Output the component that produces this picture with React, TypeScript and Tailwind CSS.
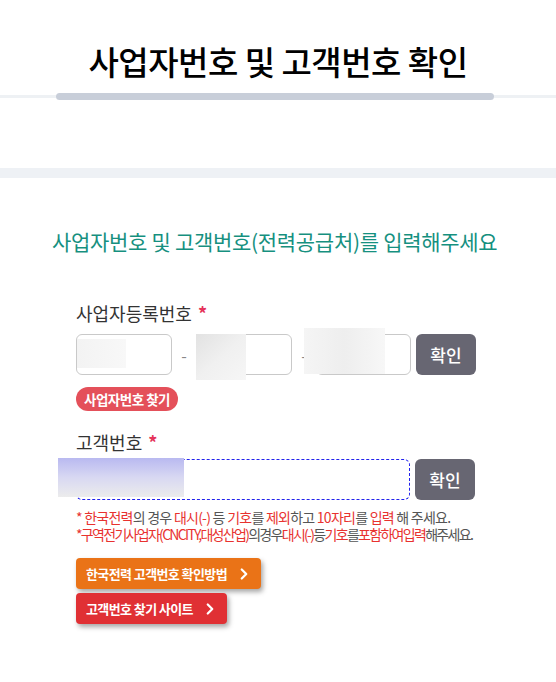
import { ChevronRight } from 'lucide-react';

const FONT = "font-['Noto_Sans_CJK_KR','Noto_Sans',sans-serif]";

function Blur({ className }: { className: string }) {
  // privacy blur patches over the inputs
  return <div className={`absolute pointer-events-none ${className}`} />;
}

export default function App() {
  return (
    <div className={`${FONT} w-[556px] h-[682px] bg-white text-[#222] overflow-hidden`}>
      {/* Title */}
      <div className="pt-[36px] h-[93px] text-center">
        <h1 className="text-[33px] font-medium leading-[50px] tracking-[-0.5px] text-black">
          사업자번호 및 고객번호 확인
        </h1>
      </div>
      <div className="flex items-center h-[7px]">
        <div className="w-[56px] h-[3px] bg-[#eef1f4]" />
        <div className="w-[438px] h-[7px] rounded-full bg-[#c8ced9]" />
        <div className="flex-1 h-[3px] bg-[#eef1f4]" />
      </div>
      <div className="h-[68px]" />
      <div className="h-[10px] bg-[#eef1f5]" />

      {/* Subtitle */}
      <div className="pt-[48px] pl-[52px]">
        <p className="text-[21px] leading-[30px] text-[#16907f] tracking-[-0.3px]">
          사업자번호 및 고객번호(전력공급처)를 입력해주세요
        </p>
      </div>

      <div className="pl-[76px] pt-[44px]">
        {/* 사업자등록번호 */}
        <div className="flex items-center gap-[6px] h-[26px]">
          <span className="text-[18px] text-[#333]">사업자등록번호</span>
          <span className="text-[#e5335a] text-[18px] font-bold leading-none">*</span>
        </div>
        <div className="relative flex items-center mt-[8px] h-[41px]">
          <div className="w-[96px] h-[41px] rounded-[6px] border border-[#c9c9c9]" />
          <span className="w-[24px] text-center text-[#888]">-</span>
          <div className="w-[96px] h-[41px] rounded-[6px] border border-[#c9c9c9]" />
          <span className="w-[24px] text-center text-[#888]">-</span>
          <div className="w-[95px] h-[41px] rounded-[6px] border border-[#c9c9c9]" />
          <button className="ml-[5px] w-[60px] h-[41px] rounded-[6px] bg-[#676672] text-white text-[17px] font-medium">
            확인
          </button>
          <Blur className="left-[1px] top-[5px] w-[49px] h-[29px] bg-gradient-to-r from-[#f3f3f3] to-[#f8f8f8]" />
          <Blur className="left-[120px] top-[0px] w-[50px] h-[46px] bg-gradient-to-br from-[#e2e2e2] via-[#f0f0f0] to-[#f6f6f6]" />
          <Blur className="left-[228px] top-[-6px] w-[81px] h-[46px] bg-gradient-to-r from-[#f5f5f5] via-[#eeeeee] to-[#f7f7f7]" />
        </div>
        <div className="mt-[11px]">
          <span className="inline-flex items-center h-[24px] px-[8px] rounded-full bg-[#e4505a] text-white text-[13.5px] font-bold tracking-[-0.5px]">
            사업자번호 찾기
          </span>
        </div>

        {/* 고객번호 */}
        <div className="flex items-center gap-[6px] h-[26px] mt-[18px]">
          <span className="text-[18px] text-[#333]">고객번호</span>
          <span className="text-[#e5335a] text-[18px] font-bold leading-none">*</span>
        </div>
        <div className="relative flex items-center mt-[4px] h-[41px]">
          <div className="w-[334px] h-[41px] rounded-[6px] border border-dashed border-[#2222ee]" />
          <button className="ml-[5px] w-[60px] h-[41px] rounded-[6px] bg-[#676672] text-white text-[17px] font-medium">
            확인
          </button>
          <Blur className="left-[-18px] top-[-1px] w-[126px] h-[39px] bg-gradient-to-b from-[#b9b9f0] via-[#d8d8f2] to-[#ececec]" />
        </div>

        {/* Notes */}
        <div className="mt-[9px] text-[14px] leading-[17px] text-[#555]">
          <p className="tracking-[-0.75px]">
            <span className="text-[#e8322f]">* 한국전력</span>의 경우{' '}
            <span className="text-[#e8322f]">대시(-)</span> 등 <span className="text-[#e8322f]">기호</span>를{' '}
            <span className="text-[#e8322f]">제외</span>하고 <span className="text-[#e8322f]">10자리</span>를{' '}
            <span className="text-[#e8322f]">입력</span> 해 주세요.
          </p>
          <p className="tracking-[-1.7px]">
            <span className="text-[#e8322f]">*구역전기사업자(CNCITY,대성산업)</span>의경우
            <span className="text-[#e8322f]">대시(-)</span>등<span className="text-[#e8322f]">기호</span>를
            <span className="text-[#e8322f]">포함하여입력</span>해주세요.
          </p>
        </div>

        {/* Link buttons */}
        <div className="mt-[15px] flex flex-col items-start gap-[4px]">
          <a className="inline-flex items-center h-[31px] pl-[10px] pr-[8px] rounded-[4px] bg-[#ea7317] text-white text-[13px] font-bold tracking-[-0.6px] shadow-[2px_3px_5px_rgba(0,0,0,0.35)]">
            한국전력 고객번호 확인방법
            <ChevronRight className="ml-[8px] w-[18px] h-[18px]" strokeWidth={3} />
          </a>
          <a className="inline-flex items-center h-[31px] pl-[10px] pr-[8px] rounded-[4px] bg-[#e03034] text-white text-[13px] font-bold tracking-[-0.6px] shadow-[2px_3px_5px_rgba(0,0,0,0.35)]">
            고객번호 찾기 사이트
            <ChevronRight className="ml-[8px] w-[18px] h-[18px]" strokeWidth={3} />
          </a>
        </div>
      </div>
    </div>
  );
}
